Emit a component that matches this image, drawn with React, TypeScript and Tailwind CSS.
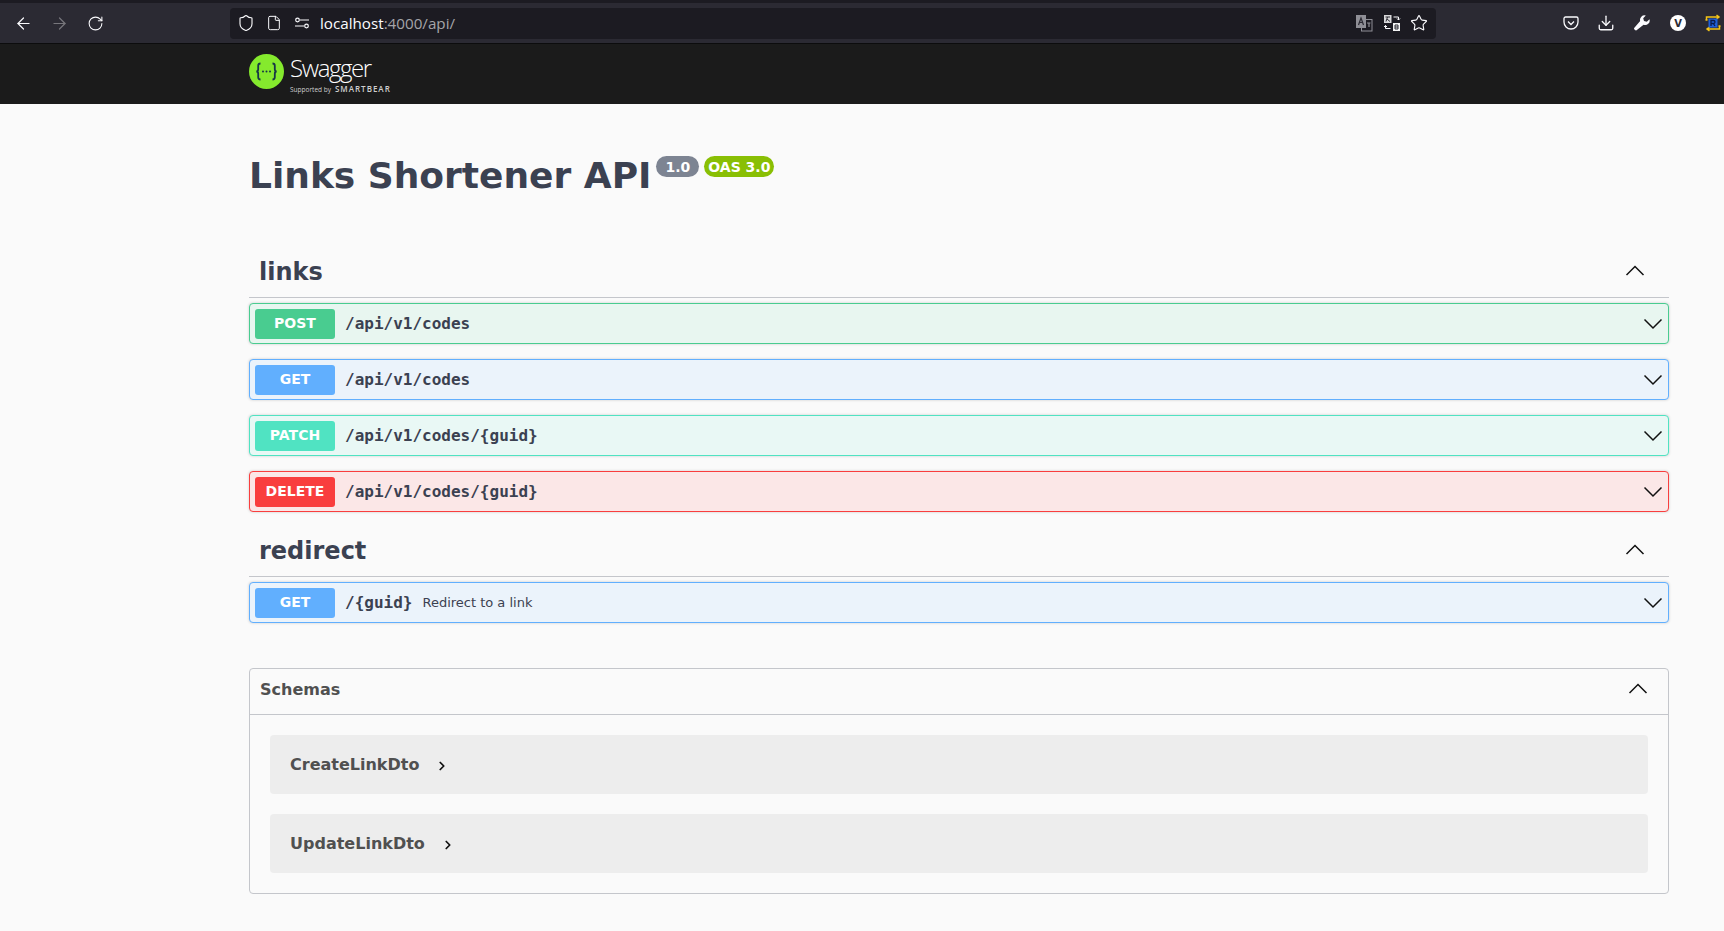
import { ArrowLeft, ArrowRight, RotateCw, Shield, File, Star, Download, ChevronRight } from 'lucide-react';

const sans = 'font-["DejaVu_Sans",sans-serif]';

const ops = {
    POST: { row: 'border-[#49cc90] bg-[#e8f6f0]', badge: 'bg-[#49cc90]' },
    GET: { row: 'border-[#61affe] bg-[#ebf3fb]', badge: 'bg-[#61affe]' },
    PATCH: { row: 'border-[#50e3c2] bg-[#e9f8f5]', badge: 'bg-[#50e3c2]' },
    DELETE: { row: 'border-[#f93e3e] bg-[#fbe7e7]', badge: 'bg-[#f93e3e]' },
};

// swagger-ui's wide accordion arrow
const Arrow = ({ up }: { up?: boolean }) => (
    <svg width="20" height="20" viewBox="0 0 20 20" fill="none" stroke="#111" strokeWidth="1.500" className="ml-auto shrink-0">
        <path d={up ? 'M1.500 13 10 4.500 18.500 13' : 'M1.500 5.500 10 14 18.500 5.500'} />
    </svg>
);

const Opblock = ({ method, path, desc }: { method: keyof typeof ops; path: string; desc?: string }) => (
    <div className={`flex items-center h-[41px] mb-[15px] border rounded p-[5px] shadow-[0_0_3px_rgba(0,0,0,0.19)] ${ops[method].row}`}>
        <span className={`w-20 h-[30px] pb-[1px] flex items-center justify-center rounded-[3px] text-white text-sm font-bold ${ops[method].badge}`}>
            {method}
        </span>
        <span className='pl-2.5 font-["DejaVu_Sans_Mono",monospace] font-bold text-base text-[#3b4151]'>{path}</span>
        {desc && <span className="pl-2.5 text-[13px] text-[#3b4151]">{desc}</span>}
        <Arrow />
    </div>
);

const TagHeader = ({ name }: { name: string }) => (
    <div className="flex items-center h-[50px] mb-[5px] pb-[1px] pl-2.5 pr-6 border-b border-[#c4c6cb]">
        <h3 className="text-2xl font-bold text-[#3b4151]">{name}</h3>
        <Arrow up />
    </div>
);

const Model = ({ name }: { name: string }) => (
    <div className="flex items-center h-[59px] mb-5 last:mb-0 pl-5 rounded bg-[#ededed]">
        <span className="text-base font-bold text-[#505050]">{name}</span>
        <ChevronRight className="ml-4 mt-0.5 text-[#111]" size={14} strokeWidth={3} />
    </div>
);

const SwaggerLogo = () => (
    <svg width="35" height="35" viewBox="0 0 35 35" className="shrink-0">
        <circle cx="17.500" cy="17.500" r="17.500" fill="#85ea2d" />
        <path d="M11.500 9.500c-1.800 0-2.300.8-2.300 2.200v3.600c0 1.300-.6 2.200-1.900 2.200 1.300 0 1.900.9 1.900 2.200v3.600c0 1.400.5 2.200 2.300 2.200M23.500 9.500c1.800 0 2.300.8 2.300 2.200v3.600c0 1.300.6 2.200 1.900 2.200-1.300 0-1.900.9-1.900 2.200v3.600c0 1.400-.5 2.200-2.300 2.200" fill="none" stroke="#173646" strokeWidth="1.800" />
        <circle cx="14" cy="17.500" r="1" fill="#173646" />
        <circle cx="17.500" cy="17.500" r="1" fill="#173646" />
        <circle cx="21" cy="17.500" r="1" fill="#173646" />
    </svg>
);

const SiteControls = () => (
    <svg width="16" height="16" viewBox="0 0 16 16" fill="none" stroke="#fbfbfe" strokeWidth="1.200">
        <path d="M6 5h9M1 11h9" />
        <circle cx="3.500" cy="5" r="1.800" />
        <circle cx="12.500" cy="11" r="1.800" />
    </svg>
);

const TranslatePage = () => (
    <svg width="18" height="18" viewBox="0 0 18 18">
        <rect x="6.500" y="5.500" width="10.500" height="11.500" fill="none" stroke="#8f8f96" />
        <rect x="1" y="1" width="10" height="13" fill="#8f8f96" />
        <path d="M3.500 11 6 4l2.500 7M4.500 8.500h3" fill="none" stroke="#2b2a33" strokeWidth="1.200" />
        <path d="M12 9h3.500M14 9v4" fill="none" stroke="#8f8f96" strokeWidth="1.200" />
    </svg>
);

const TranslateTo = () => (
    <svg width="18" height="18" viewBox="0 0 18 18">
        <rect x="1" y="1" width="7.500" height="8" fill="#d8d8da" />
        <rect x="10" y="9" width="7" height="8" fill="#f4f4f4" />
        <path d="M2.500 3h4.500M4.500 3 3 7.500M4 5l3 2.500" fill="none" stroke="#2b2a33" />
        <path d="M12 11h3v4h-3zM12 13h3" fill="none" stroke="#2b2a33" />
        <path d="M10.500 3h5v3M14 4.500 15.500 6 17 4.500M7.500 14.500h-5v-3M1 13l1.500-1.500L4 13" fill="none" stroke="#fbfbfe" />
    </svg>
);

const Pocket = () => (
    <svg width="16" height="16" viewBox="0 0 16 16" fill="none" stroke="#fbfbfe" strokeWidth="1.300">
        <path d="M2.500 2h11c.8 0 1.500.6 1.500 1.400V7a7 7 0 0 1-14 0V3.400C1 2.600 1.700 2 2.500 2Z" />
        <path d="m5 6.500 3 3 3-3" />
    </svg>
);

const WrenchIcon = () => (
    <svg width="16" height="16" viewBox="0 0 16 16" className="ml-5 shrink-0">
        <path d="M15.500 4.200 12.800 6.800 10 6 9.200 3.200 11.800.5a4.500 4.500 0 0 0-5.600 5.600L.6 12.400a1.600 1.600 0 0 0 .2 2.400 1.600 1.600 0 0 0 2.400-.1l6.400-5a4.500 4.500 0 0 0 5.900-5.500Z" fill="#fbfbfe" />
    </svg>
);

const Extension = () => (
    <svg width="18" height="18" viewBox="0 0 18 18" className="shrink-0">
        <path d="M14 3H2.500v3M4 15h11.500v-3M12.500 1l2.500 2-2.500 2M5.500 13 3 15l2.500 2" fill="none" stroke="#f5c518" strokeWidth="1.500" />
        <path d="M1.500 6h2M14.500 12h2" stroke="#f5c518" strokeWidth="1.500" />
        <rect x="4.500" y="4.500" width="9" height="9" fill="#1f5fd8" />
        <path d="M7 12V6.500h2.500a1.400 1.400 0 0 1 0 3H7M9.300 9.500l1.700 2.500" fill="none" stroke="#0b1a4a" strokeWidth="1.300" />
    </svg>
);

const App = () => {
    return (
        <div className={`min-h-[931px] bg-[#fafafa] overflow-hidden ${sans}`}>
            <div className="h-[3px] bg-[#1c1b22]" />
            <div className="flex items-center h-[41px] pl-[5px] bg-[#2b2a33] border-b border-[#0c0c0d] text-[#fbfbfe]">
                <span className="w-9 flex justify-center"><ArrowLeft size={19} strokeWidth={1.5} /></span>
                <span className="w-9 flex justify-center text-[#77767c]"><ArrowRight size={19} strokeWidth={1.5} /></span>
                <span className="w-9 flex justify-center"><RotateCw size={17} strokeWidth={1.5} /></span>
                <div className="flex items-center ml-[117px] w-[1206px] h-[31px] pl-[7px] pr-2 rounded bg-[#1c1b22]">
                    <Shield size={18} strokeWidth={1.5} />
                    <File size={16} strokeWidth={1.5} className="ml-[11px]" />
                    <span className="ml-3"><SiteControls /></span>
                    <span className='ml-[10px] font-["Open_Sans",sans-serif] text-[15.200px]'>
                        localhost<span className="text-[#a5a5a9]">:4000/api/</span>
                    </span>
                    <span className="ml-auto"><TranslatePage /></span>
                    <span className="ml-2.5"><TranslateTo /></span>
                    <Star size={18} strokeWidth={1.5} className="ml-[9px]" />
                </div>
                <div className="flex items-center ml-[127px]"><Pocket /></div>
                <Download size={18} strokeWidth={1.75} className="ml-[18px]" />
                <span className="ml-[-1px]"><WrenchIcon /></span>
                <span className="ml-5 w-4 h-4 shrink-0 flex items-center justify-center rounded-full bg-white text-[#2b2a33] text-[10px] font-bold">V</span>
                <span className="ml-[18px]"><Extension /></span>
            </div>

            <div className="flex items-center h-[60px] pl-[249px] bg-[#1b1b1b]">
                <span className="mb-[5px]"><SwaggerLogo /></span>
                <div className="ml-[6px] flex flex-col text-white">
                    <span className='font-["Open_Sans",sans-serif] font-light text-[24px] leading-[28px] tracking-[-1.400px]'>Swagger</span>
                    <div className='flex items-baseline mt-[2px] font-["Open_Sans",sans-serif] leading-[9px] text-[#cfcfcf]'>
                        <span className="text-[6.500px]">Supported by</span>
                        <span className="ml-1 text-[8px] font-semibold tracking-[1px]">SMARTBEAR</span>
                    </div>
                </div>
            </div>

            <main className="w-[1420px] ml-[249px]">
                <div className="flex items-start pt-[58px] h-[144px]">
                    <h1 className="text-4xl leading-[30px] mt-[-2px] pt-[1px] font-bold text-[#3b4151]">Links Shortener API</h1>
                    <span className="ml-[5px] mt-[-6px] h-[21px] px-[9px] flex items-center rounded-full bg-[#7d8492] text-white text-sm font-bold">1.0</span>
                    <span className="ml-[5px] mt-[-6px] h-[21px] px-1 flex items-center rounded-full bg-[#89bf04] text-white text-sm font-bold">OAS 3.0</span>
                </div>

                <TagHeader name="links" />
                <Opblock method="POST" path="/api/v1/codes" />
                <Opblock method="GET" path="/api/v1/codes" />
                <Opblock method="PATCH" path="/api/v1/codes/{guid}" />
                <Opblock method="DELETE" path="/api/v1/codes/{guid}" />
                <TagHeader name="redirect" />
                <Opblock method="GET" path="/{guid}" desc="Redirect to a link" />

                <section className="mt-[45px] border border-[#c4c6cb] rounded">
                    <div className="flex items-center h-[46px] pb-[3px] pl-2.5 pr-5 border-b border-[#c4c6cb]">
                        <h4 className="text-base font-bold text-[#505050]">Schemas</h4>
                        <Arrow up />
                    </div>
                    <div className="px-5 py-5">
                        <Model name="CreateLinkDto" />
                        <Model name="UpdateLinkDto" />
                    </div>
                </section>
            </main>
        </div>
    );
};

export default App;
